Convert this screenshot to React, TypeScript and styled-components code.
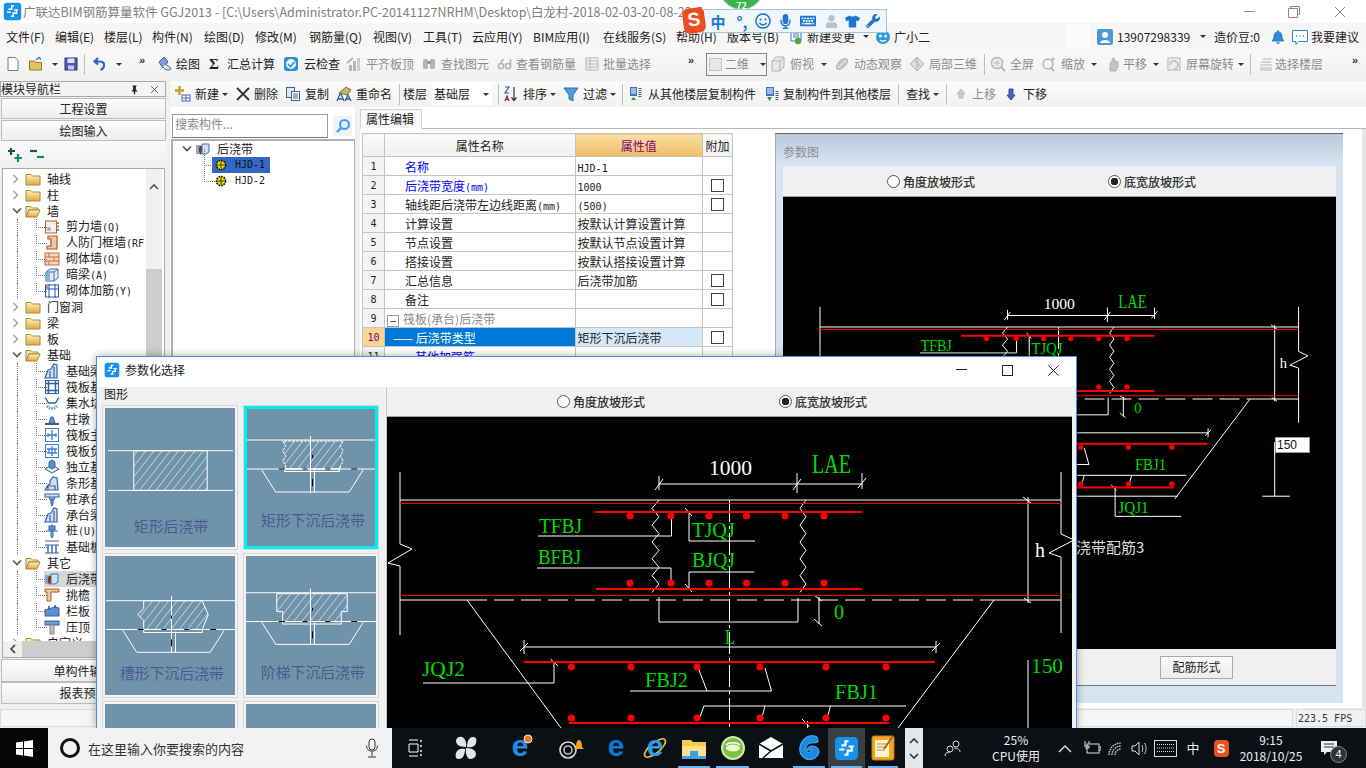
import React from 'react';
import styled, { createGlobalStyle } from 'styled-components';
import { FaMicrophone, FaTshirt, FaWrench, FaRegSmile, FaKeyboard, FaBell, FaUser } from 'react-icons/fa';

const CJK = '"Noto Sans CJK SC", "Liberation Sans", sans-serif';
const Global = createGlobalStyle`
  html, body { margin: 0; padding: 0; background: #fff; overflow: hidden; }
  * { box-sizing: border-box; }
  body { font-family: ${CJK}; font-size: 12px; color: #222; }
`;

const Screen = styled.div`position: relative; width: 1366px; height: 768px; overflow: hidden; display: flex; flex-direction: column; background: #fff;`;
const TitleBar = styled.div`height: 23px; flex: none; background: #fff; display: flex; align-items: center; padding-left: 3px; color: #808080; font-size: 12.5px; white-space: nowrap;`;
const TitleText = styled.span`margin-left: 1px; width: 680px; overflow: hidden;`;
const WinBtns = styled.div`margin-left: auto; display: flex; padding-right: 3px;`;
const WinBtn = styled.span<{ $w: number }>`width: ${p => p.$w}px; height: 23px; display: flex; align-items: center; justify-content: center;`;
const BarRow = styled.div<{ $h: number; $bg: string }>`height: ${p => p.$h}px; flex: none; display: flex; align-items: center; background: ${p => p.$bg}; white-space: nowrap;`;
const Slot = styled.div<{ $w: number }>`width: ${p => p.$w}px; flex: none; display: flex; align-items: center; height: 100%;`;
const IconBox = styled.span<{ $w: number }>`width: ${p => p.$w}px; flex: none; display: flex; align-items: center;`;
const Label = styled.span<{ $muted?: boolean }>`font-size: 12px; line-height: 16px; color: ${p => (p.$muted ? '#8c8c8c' : '#222')};`;
const Caret = styled.span`width: 0; height: 0; border-left: 3px solid transparent; border-right: 3px solid transparent; border-top: 3px solid #333;`;
const Sep = styled.span`width: 1px; height: 21px; background: #bdbdbd;`;
const More = styled.span`font-size: 11px; font-weight: 700; color: #333; font-family: "Liberation Sans", sans-serif; line-height: 10px; align-self: flex-start; margin-top: 5px;`;
const Combo2D = styled.div`width: 61px; height: 23px; border: 1px solid #858585; display: flex; align-items: center; gap: 3px; padding-left: 2px; background: #f4f4f4;`;
const Square = styled.span`width: 15px; height: 13px; background: #e8e8e8; border: 1px solid #c4c4c4;`;
const FloorCombo = styled.div`width: 60px; height: 22px; background: #fff; display: flex; align-items: center; justify-content: space-between; padding: 0 3px 0 2px;`;
const WhiteBlock = styled.span`display: block; width: 24px; height: 24px; background: #fbfbfb;`;
const SigmaGlyph = styled.span`font: 700 15px "Liberation Serif", serif; color: #222;`;
const Gap6 = styled.span`width: 6px;`;

const Main = styled.div`flex: 1; min-height: 0; display: flex; background: #f0f0f0;`;
const LeftNav = styled.div`width: 167px; flex: none; padding-top: 3px; display: flex; flex-direction: column; background: #f0f0f0;`;
const NavHead = styled.div`height: 16px; margin-right: 1px; border: 1px solid #a9a9a9; display: flex; align-items: center; font-size: 12px; line-height: 14px; color: #222; background: #f4f4f4;`;
const NavHeadBtns = styled.span`margin-left: auto; display: flex; align-items: center; gap: 9px; padding-right: 5px;`;
const NavBtn = styled.div<{ $h: number; $mt?: number }>`height: ${p => p.$h}px; margin: ${p => p.$mt ?? 1}px 1px 0 1px; border: 1px solid #bdbdbd; background: linear-gradient(#fdfdfd, #ededed); text-align: center; font-size: 12px; line-height: ${p => p.$h - 2}px; color: #222;`;
const ExpandBar = styled.div`height: 27px; flex: none; display: flex; align-items: center; padding-left: 7px; gap: 6px; background: linear-gradient(#fafafa, #f0f0f0);`;
const TreeBox = styled.div`height: 490px; flex: none; margin: 0 2px; border: 1px solid #a9a9a9; background: #fff; display: flex; flex-direction: column; overflow: hidden;`;
const TreeInner = styled.div`flex: 1; min-height: 0; display: flex; overflow: hidden;`;
const TreeList = styled.div`flex: 1; padding-top: 2px; overflow: hidden;`;
const VScroll = styled.div`width: 16px; flex: none; background: #f0f0f0; display: flex; flex-direction: column; margin-right: 2px;`;
const ScrollUp = styled.div`height: 100px; flex: none; background: #f0f0f0; padding: 7px 0 0 3px;`;
const ScrollThumb = styled.div`flex: 1; background: #cdcdcd;`;
const HScroll = styled.div`height: 16px; flex: none; background: #f0f0f0; display: flex;`;
const HArrow = styled.div`width: 19px; display: flex; align-items: center; justify-content: center;`;
const HThumb = styled.div`flex: 1; background: #cdcdcd;`;
const Row = styled.div<{ $lvl: number; $dots?: boolean }>`
  position: relative; height: 16px; display: flex; align-items: center; padding-left: ${p => (p.$lvl ? 41 : 9)}px; white-space: nowrap;
  &::before { content: ''; display: ${p => (p.$dots ? 'block' : 'none')}; position: absolute; left: 14px; top: 0; bottom: 0; border-left: 1px dotted #777; }
  &::after { content: ''; display: ${p => (p.$lvl ? 'block' : 'none')}; position: absolute; left: 33px; top: 0; width: 10px; height: 8px; border-left: 1px dotted #777; border-bottom: 1px dotted #777; }
`;
const Chev = styled.span`width: 13px; flex: none; display: flex;`;
const RowIcon = styled.span<{ $hl?: boolean }>`width: 20px; height: 16px; flex: none; display: flex; align-items: center; background: ${p => (p.$hl ? '#d8d8d8' : 'transparent')};`;
const RowText = styled.span<{ $hl?: boolean }>`font-size: 12px; line-height: 16px; color: #222; padding-left: 2px; background: ${p => (p.$hl ? '#d8d8d8' : 'transparent')};`;
const Lat = styled.span`font-family: "DejaVu Sans Mono", monospace; font-size: 10px;`;

const RightCol = styled.div`flex: 1; min-width: 0; display: flex; flex-direction: column; padding: 3px 0 0 3px;`;
const Work = styled.div`flex: 1; min-height: 0; display: flex; gap: 5px;`;
const CompPanel = styled.div`width: 185px; flex: none; display: flex; flex-direction: column; padding-top: 6px; background: #fff;`;
const SearchRow = styled.div`height: 25px; flex: none; display: flex; align-items: center; gap: 5px; padding-left: 2px;`;
const SearchInput = styled.div`width: 156px; height: 24px; border: 1px solid #9a9a9a; border-bottom-color: #777; background: #fff; color: #8a8a8a; font-size: 12px; line-height: 18px; padding-left: 2px;`;
const SearchBtn = styled.div`width: 19px; height: 20px; background: #f2f2f2; display: flex; align-items: center; justify-content: center;`;
const CompTree = styled.div`flex: 1; margin: 1px 0 0 1px; border: 2px solid #b0b0b0; border-right-width: 1px; background: #fff;`;
const CRow = styled.div<{ $child?: boolean }>`position: relative; height: 16px; display: flex; align-items: center; padding-left: ${p => (p.$child ? 39 : 9)}px;
  &::after { content: ''; display: ${p => (p.$child ? 'block' : 'none')}; position: absolute; left: 31px; top: -8px; width: 10px; height: 16px; border-left: 1px dotted #777; border-bottom: 1px dotted #777; }
`;
const CText = styled.span<{ $sel?: boolean }>`padding: 0 5px 0 2px; line-height: 16px; color: ${p => (p.$sel ? '#111' : '#222')}; background: ${p => (p.$sel ? '#3168c4' : 'transparent')}; display: flex; align-items: center; gap: 7px;`;

const PropPanel = styled.div`flex: 1; min-width: 0; display: flex; flex-direction: column; padding-top: 2px; background: #fff;`;
const TabBar = styled.div`height: 20px; flex: none; display: flex; border-bottom: 1px solid #b8b8b8;`;
const Tab = styled.div`width: 62px; height: 20px; border: 1px solid #d0d0d0; border-bottom: 1px solid #fff; background: #f8f8f8; font-size: 12px; line-height: 18px; padding-left: 5px;`;
const PropBody = styled.div`flex: 1; min-height: 0; display: flex;`;
const TableWrap = styled.div`width: 415px; flex: none; padding: 4px 0 0 2px; background: #fff;`;
const Grid = styled.table`border-collapse: collapse; table-layout: fixed; width: 371px; border: 1px solid #b0b0b0; font-size: 12px;`;
const HCell = styled.th<{ $val?: boolean }>`height: 23px; padding: 0; font-weight: 400; font-size: 12px; border: 1px solid #c4c4c4; color: ${p => (p.$val ? '#800080' : '#222')}; background: ${p => (p.$val ? 'linear-gradient(#fbdea5, #f0bd63)' : 'linear-gradient(#fbfbfb, #efefef)')};`;
const NumCell = styled.td<{ $on?: boolean }>`height: 19px; padding: 0; text-align: center; border: 1px solid #c4c4c4; font-family: "DejaVu Sans Mono", monospace; font-size: 10px; color: ${p => (p.$on ? '#800080' : '#222')}; background: ${p => (p.$on ? '#f9d48c' : '#f4f4f4')};`;
const NameCell = styled.td<{ $c?: string; $on?: boolean; $sub?: number }>`height: 19px; padding: 0 0 0 ${p => p.$sub ?? 20}px; border: 1px solid #c4c4c4; white-space: nowrap; overflow: hidden; color: ${p => p.$c ?? '#222'}; background: ${p => (p.$on ? '#0078d7' : '#fff')};`;
const ValCell = styled.td<{ $on?: boolean }>`height: 19px; padding: 0 0 0 2px; border: 1px solid #c4c4c4; white-space: nowrap; background: ${p => (p.$on ? '#d5e8f8' : '#fff')};`;
const AddCell = styled.td`height: 19px; padding: 0; border: 1px solid #c4c4c4; text-align: center;`;
const Check = styled.span`display: block; width: 13px; height: 13px; margin: 0 auto; border: 1px solid #444; background: #fff;`;
const Minus = styled.span`display: inline-block; width: 12px; height: 12px; border: 1px solid #999; margin: 0 4px 0 -18px; line-height: 9px; text-align: center; vertical-align: -2px; color: #333; font-size: 12px;`;

const ParamPanel = styled.div`width: 568px; flex: none; margin-top: 4px; height: 570px; border-top: 1px solid #666; border-left: 1px solid #aaa; background: linear-gradient(#b8cad9 0, #d6e4f1 30px, #d6e4f1 100%); padding: 0 7px; display: flex; flex-direction: column;`;
const ParamTitle = styled.div`height: 32px; flex: none; color: #8f8f8f; font-size: 12px; line-height: 35px;`;
const RadioBar = styled.div<{ $h: number; $first: number; $gap: number }>`height: ${p => p.$h}px; flex: none; background: #f0f0f0; border-bottom: 1px solid #a0a0a0; display: flex; align-items: center; padding-left: ${p => p.$first}px; gap: ${p => p.$gap}px; font-size: 12px;`;
const Radio = styled.span`display: flex; align-items: center; gap: 3px; font-size: 12px; color: #222; -webkit-text-stroke: 0.2px #222;`;
const RadioDot = styled.span<{ $on?: boolean }>`width: 13px; height: 13px; border-radius: 50%; border: 1px solid #555; background: ${p => (p.$on ? 'radial-gradient(circle, #222 0, #222 3.5px, #fff 4px)' : '#fff')};`;
const ParamCanvas = styled.div`height: 452px; flex: none; background: #000; position: relative;`;
const Input150 = styled.div`position: absolute; left: 492px; top: 240px; width: 35px; height: 16px; background: #fff; border: 1px solid #999; color: #111; font-size: 12px; font-family: "Liberation Sans", sans-serif; line-height: 14px; padding-left: 1px;`;
const ParamFoot = styled.div`height: 37px; flex: none; background: #f0f0f0; border-bottom: 1px solid #777; display: flex; align-items: center; justify-content: flex-end; padding: 0 103px 0 0;`;
const FootBtn = styled.div`width: 73px; height: 23px; border: 1px solid #aaa; background: linear-gradient(#fafafa, #ececec); text-align: center; line-height: 20px; font-size: 12px;`;
const RightGutter = styled.div`flex: 1; background: #fff; border-right: 4px solid #e6e6e6;`;

const StatusBar = styled.div`height: 20px; flex: none; background: #f0f0f0; display: flex; padding-top: 1px; border-bottom: 1px solid #eee;`;
const StatusMain = styled.div`flex: 1; margin-right: 3px; border: 1px solid #dcdcdc; background: #f6f6f6;`;
const StatusFps = styled.div`width: 70px; border: 1px solid #dcdcdc; font-family: "DejaVu Sans Mono", monospace; font-size: 10px; line-height: 17px; padding-left: 1px; color: #333;`;

const Taskbar = styled.div`height: 40px; flex: none; background: #0b1015; display: flex; align-items: stretch; color: #fff; position: relative; z-index: 6;`;
const StartBtn = styled.div`width: 48px; flex: none; display: flex; align-items: center; justify-content: center; background: #050505;`;
const SearchBox = styled.div`width: 344px; flex: none; background: #f2f2f2; display: flex; align-items: center; padding-left: 12px; color: #333; font-size: 13px;`;
const Cortana = styled.span`width: 20px; height: 20px; border-radius: 50%; border: 3px solid #111; flex: none; margin-right: 8px;`;
const MicWrap = styled.span`margin-left: auto; margin-right: 13px; display: flex; color: #333;`;
const TaskSlot = styled.div<{ $w: number; $active?: boolean; $run?: boolean }>`position: relative; width: ${p => p.$w}px; flex: none; display: flex; align-items: center; justify-content: center; background: ${p => (p.$active ? '#3c3f42' : 'transparent')};
  &::after { content: ''; display: ${p => (p.$run ? 'block' : 'none')}; position: absolute; left: 3px; right: 3px; bottom: 0; height: 2px; background: #6cb2f5; }
`;
const TaskScroll = styled.div`width: 18px; flex: none; margin-left: 4px; background: #e4e7ea; display: flex; flex-direction: column; justify-content: space-between; align-items: center; padding: 9px 0 8px;`;
const TwoLine = styled.div<{ $w: number }>`width: ${p => p.$w}px; flex: none; display: flex; flex-direction: column; align-items: center; justify-content: center; font-size: 12px; line-height: 16px; color: #eee; white-space: nowrap;`;
const NotifyBadge = styled.span`position: absolute; left: 24px; top: 18px; width: 17px; height: 17px; border-radius: 50%; background: #333; border: 1px solid #888; font-size: 11px; line-height: 15px; text-align: center; color: #fff; font-family: "Liberation Sans", sans-serif;`;
const TrayS = styled.span`display: block; width: 15px; height: 17px; background: #e9521c; border-radius: 4px; color: #fff; font: 700 13px/17px "Liberation Sans", sans-serif; text-align: center;`;
const TrayZh = styled.span`font-size: 13px;`;

const Dialog = styled.div`position: absolute; left: 96px; top: 356px; width: 981px; height: 372px; z-index: 5; background: #f0f0f0; border: 1px solid #4a90d9; border-bottom: 0; display: flex; flex-direction: column; overflow: hidden; box-shadow: 0 0 8px rgba(0,0,0,.35);`;
const DlgTitle = styled.div`height: 30px; flex: none; background: #fff; display: flex; align-items: flex-start; padding: 5px 0 0 7px; font-size: 12px; line-height: 16px; color: #222;`;
const DlgTitleText = styled.span`margin-left: 5px;`;
const DlgBtns = styled.div`margin-left: auto; margin-top: -5px; display: flex;`;
const DlgBtn = styled.span`width: 46px; height: 26px; display: flex; align-items: center; justify-content: center;`;
const DlgBody = styled.div`flex: 1; min-height: 0; display: flex;`;
const DlgLeft = styled.div`width: 290px; flex: none; padding: 0 0 0 5px; background: #f0f0f0; overflow: hidden; border-right: 1px solid #c8c8c8;`;
const GroupLabel = styled.div`font-size: 12px; line-height: 14px; height: 18px; padding-left: 2px; color: #222;`;
const CardGrid = styled.div`display: grid; grid-template-columns: 136px 136px; grid-auto-rows: 145px; gap: 3px 5px;`;
const Card = styled.div<{ $sel?: boolean }>`border: 1px solid #d6d6d6; padding: ${p => (p.$sel ? 0 : 2)}px; background: #f4f4f4;`;
const CardArt = styled.svg<{ $sel?: boolean }>`display: block; width: 100%; height: 100%; background: #6f93aa; ${p => (p.$sel ? 'outline: 3px solid #00f0f0; outline-offset: -3px;' : '')}`;
const DlgRight = styled.div`flex: 1; min-width: 0; display: flex; flex-direction: column; padding-right: 4px;`;
const DlgCanvas = styled.div`flex: 1; min-height: 0; background: #000; overflow: hidden;`;
const CadSvg = styled.svg`display: block; width: 100%; height: 100%;
  line, polyline, path { vector-effect: non-scaling-stroke; fill: none; }
`;

const Sogou = styled.div`position: absolute; left: 683px; top: 0; width: 204px; height: 34px; z-index: 9; display: flex; align-items: center; padding-top: 8px;`;
const SogouS = styled.span`position: absolute; left: 0; top: 8px; width: 22px; height: 25px; z-index: 2; border-radius: 6px; background: #ee4c1e; color: #fff; font: 700 19px/24px "Liberation Sans", sans-serif; text-align: center; transform: rotate(-8deg);`;
const SogouBar = styled.div`margin-left: 20px; width: 184px; height: 24px; background: #f1f6fb; border: 1px solid #a9c3d6; display: flex; align-items: center; color: #1b78d0;`;
const SogouCell = styled.span<{ $w: number; $c?: string }>`width: ${p => p.$w}px; flex: none; display: flex; align-items: center; justify-content: center; color: ${p => p.$c ?? '#1b78d0'}; font-size: 15px; font-weight: 700;`;
const GreenBall = styled.div`position: absolute; left: 35px; top: -40px; width: 47px; height: 50px; border-radius: 50%; background: #39b54a; border: 1px solid #bcd; color: #fff; font-size: 9px; text-align: center; padding-top: 40px; line-height: 9px; font-weight: 700;`;

/* ---------- icons ---------- */
const Svg16 = styled.svg`display: block; flex: none;`;
const I: React.FC<{ s?: number; children: React.ReactNode }> = ({ s = 16, children }) => (
  <Svg16 width={s} height={s} viewBox="0 0 16 16">{children}</Svg16>
);
const g = '#b4b4b4';
const icons: Record<string, React.ReactNode> = {
  new: <path d="M3 1.5h7l3 3v10H3z" fill="#fff" stroke="#6b7a8c" />,
  open: <><path d="M1.5 5h5l1 1.5h6V14h-12z" fill="#e8c063" stroke="#98752a" /><path d="M8 4l3-2.5 2 2" fill="none" stroke="#3d78b8" strokeWidth="1.3" /></>,
  save: <><rect x="2" y="2" width="12" height="12" fill="#4a5bb8" stroke="#2b3478" /><rect x="4.5" y="2.5" width="7" height="4.5" fill="#dfe6f5" /><rect x="5" y="9.5" width="6" height="4" fill="#c8d0e0" /></>,
  undo: <path d="M6 2L2.5 5.5 6 8.5M3 5.5h5c3.5 0 4.5 2.5 4 4.5-.3 1.5-2 3.5-3.5 4" fill="none" stroke="#2c6bbd" strokeWidth="2.2" />,
  draw: <><path d="M7 1l4 5-5 6-4-6z" fill="#7aa5d8" stroke="#34608f" /><path d="M8 8c2 2 5 2 6 5-2 2-6 1-8-2" fill="#dfe9f5" stroke="#34608f" /></>,
  cloud: <><rect x="1" y="1" width="14" height="14" rx="3" fill="#2f8fd8" /><circle cx="8" cy="8" r="5" fill="#e8f4ff" /><path d="M5 8l2.5 2.5L11.5 6" fill="none" stroke="#2f8fd8" strokeWidth="1.6" /></>,
  flat: <><rect x="3" y="9" width="3" height="6" fill={g} /><rect x="7" y="5" width="3" height="10" fill={g} /><rect x="11" y="2" width="3" height="13" fill="#ccc" /><path d="M1 7l6-5" stroke={g} strokeWidth="2" /></>,
  find: <><rect x="2" y="3" width="5" height="10" rx="1.5" fill={g} /><rect x="9" y="3" width="5" height="10" rx="1.5" fill={g} /><rect x="6" y="5" width="4" height="3" fill="#999" /></>,
  rebar: <><circle cx="4" cy="10" r="2.6" fill="none" stroke={g} strokeWidth="1.5" /><circle cx="11" cy="10" r="2.6" fill="none" stroke={g} strokeWidth="1.5" /><path d="M13.5 3v7M4 8c0-3 1-4 3-4" fill="none" stroke={g} strokeWidth="1.5" /></>,
  batch: <><rect x="2" y="2" width="12" height="12" fill="none" stroke={g} /><path d="M2 5h12M2 8h12M2 11h12M6 2v12" stroke={g} /></>,
  top: <><path d="M2 5l4-4h8v10l-4 4H2z" fill="#e8e8e8" stroke={g} /><path d="M2 5h8v10M10 5l4-4" fill="none" stroke={g} /></>,
  orbit: <><ellipse cx="8" cy="8" rx="7" ry="3.5" transform="rotate(-45 8 8)" fill="#c8c8c8" stroke={g} /><path d="M4 12L12 4" stroke="#eee" /></>,
  local: <><path d="M8 1l7 7-7 7-7-7z" fill="#ddd" stroke={g} /><path d="M5 4l7 7M8 1v14" stroke={g} /></>,
  full: <><circle cx="7" cy="7" r="5.5" fill="#eee" stroke={g} strokeWidth="1.4" /><path d="M7 4v6M4 7h6" stroke={g} /><path d="M11 11l4 4" stroke={g} strokeWidth="2" /></>,
  zoom: <><circle cx="7" cy="8" r="5" fill="#f3f3f3" stroke={g} strokeWidth="1.4" /><path d="M10 12l3 3" stroke={g} strokeWidth="2" /><path d="M12 1v4M10 3h4" stroke={g} /></>,
  pan: <path d="M5 15V7l2-1V3l2-1 1 3 3 1v5l-2 4z" fill="#c4c4c4" stroke={g} />,
  rotate: <><rect x="2" y="2" width="12" height="12" fill="#eee" stroke={g} /><path d="M4 9a4 4 0 1 1 4 4" fill="none" stroke={g} strokeWidth="1.4" /></>,
  floors: <path d="M5 3h9M3 6h10M2 9h12M2 12h12M2 14h12" stroke={g} strokeWidth="1.2" />,
  add: <><path d="M4.5 0v9M0 4.5h9" stroke="#c8a21f" strokeWidth="2.4" /><rect x="7" y="9" width="8" height="6" fill="#fff" stroke="#3a70b4" /><path d="M7 12h8M11 9v6" stroke="#3a70b4" /></>,
  del: <path d="M2 2l12 12M14 2L2 14" stroke="#333" strokeWidth="1.8" />,
  copy: <><rect x="1.5" y="1.5" width="8" height="10" fill="#dfe7f5" stroke="#46628e" /><rect x="6.5" y="5.5" width="8" height="9" fill="#fff" stroke="#46628e" /><path d="M8 8h5M8 10h5M8 12h5" stroke="#46628e" /></>,
  rename: <><path d="M3 7l7-6 5 3-4 5z" fill="#c8b26a" stroke="#7a6c2c" /><path d="M1 15l3-7h1l3 7M2 13h5" fill="none" stroke="#2e5f98" strokeWidth="1.3" /><path d="M9 15l3-6 3 6M10 13h4" fill="none" stroke="#2e5f98" strokeWidth="1.3" /></>,
  sort: <><path d="M2 1h4L2 7h4" fill="none" stroke="#2a5da8" strokeWidth="1.2" /><path d="M2 15l2-5 2 5M2.7 13.5h2.6" fill="none" stroke="#a02020" strokeWidth="1.2" /><path d="M11 1v13M8.5 11.5l2.5 3 2.5-3" fill="none" stroke="#333" strokeWidth="1.2" /></>,
  filter: <path d="M1 2h14L10 9v6l-4-2V9z" fill="#4f9ddf" stroke="#2e6fa9" />,
  copyFrom: <><rect x="2" y="1" width="7" height="9" fill="#3b74c4" /><path d="M3 3h5M3 5h5M3 7h5" stroke="#fff" /><path d="M12 2v10" stroke="#555" strokeWidth="3" strokeDasharray="1 1" /><path d="M3 14l2.5-3 2.5 3z" fill="#2c9a3e" /></>,
  copyTo: <><rect x="2" y="1" width="8" height="9" fill="#3b74c4" /><path d="M3 3h6M3 5h6M3 7h6" stroke="#fff" /><path d="M13 5v10" stroke="#555" strokeWidth="3" strokeDasharray="1 1" /><path d="M3 11l2.5 4 2.5-4z" fill="#2c9a3e" /></>,
  up: <path d="M8 3l4 5H10v4H6V8H4z" fill="#c9c9c9" stroke="#bbb" />,
  down: <path d="M8 14L4 9h2V3h4v6h2z" fill="#3c66c4" stroke="#2d4d98" />,
  doc: <><path d="M3 1h8l2 2v9H3z" fill="#fff" stroke="#3b74c4" /><path d="M5 4h6M5 6h6M5 8h6" stroke="#3b74c4" /><circle cx="10" cy="12" r="3.2" fill="#52a83c" /></>,
  face: <><circle cx="8" cy="8" r="7" fill="#2899e0" /><circle cx="5.5" cy="7" r="1.5" fill="#fff" /><circle cx="10.5" cy="7" r="1.5" fill="#fff" /><path d="M5 11c2 1.5 4 1.5 6 0" stroke="#fff" fill="none" strokeWidth="1.2" /></>,
  avatar: <><rect x="0" y="0" width="16" height="16" rx="2" fill="#4b9ad8" /><circle cx="8" cy="6" r="3" fill="#fff" /><path d="M3 14c0-4 10-4 10 0z" fill="#fff" /></>,
  chat: <><path d="M.5 1.5h15v11H7l-3 3v-3H.5z" fill="#fff" stroke="#2e86d6" /><path d="M4 7h1M7.5 7h1M11 7h1" stroke="#2e86d6" strokeWidth="1.4" /></>,
  mag: <><circle cx="9.5" cy="6.5" r="4.5" fill="#d8efff" stroke="#3aa0e8" strokeWidth="2" /><path d="M6 10l-4 4" stroke="#3aa0e8" strokeWidth="2.4" /></>,
  plus2: <><path d="M4 1v7M1 4h7" stroke="#155" strokeWidth="2.2" /><path d="M11 7v8M7.5 11h7.5" stroke="#0a8a70" strokeWidth="2.2" /></>,
  minus2: <><path d="M1 4h7" stroke="#155" strokeWidth="2.2" /><path d="M8 10h7" stroke="#0a8a70" strokeWidth="2.2" /></>,
  fold: <path d="M1 3.5h5l1.5 1.5H15v9H1z" fill="url(#fg)" stroke="#a88a40" />,
  foldOpen: <><path d="M1 3.5h5l1.5 1.5H13v2H4L1 14z" fill="#f5e2a8" stroke="#a88a40" /><path d="M4 7h11l-3 7H1z" fill="url(#fg)" stroke="#a88a40" /></>,
  hatch: <><rect x="1.5" y="2" width="11" height="12" fill="#f4efe8" stroke="#a06a3a" /><circle cx="5" cy="10" r="2" fill="#aaa" /><path d="M14 3v10" stroke="#c65a1a" strokeDasharray="2 1.5" strokeWidth="1.6" /></>,
  frame: <path d="M4 1h9v13H3v-3h4V4H4z" fill="#f2c8a0" stroke="#a85a20" strokeWidth="1.2" />,
  brick: <><rect x="1" y="2" width="14" height="12" fill="#f6d8c0" stroke="#c86a3a" /><path d="M1 6h14M1 10h14M5 2v4M10 6v4M5 10v4" stroke="#c86a3a" /></>,
  beam: <><path d="M2 5l4-3h8v9l-4 3H2z" fill="#dfeaf6" stroke="#3a70b4" /><path d="M2 5h8v9M10 5l4-3" fill="none" stroke="#3a70b4" /><rect x="3" y="6" width="3" height="7" fill="#8ab0dc" /></>,
  bars: <><rect x="1.5" y="2" width="13" height="12" fill="none" stroke="#2856b8" /><path d="M5 1v14M11 1v14M1 6h14" stroke="#2856b8" /><circle cx="3" cy="4" r="1" fill="#c65a1a" /></>,
  base: <path d="M1 15l3-8 3-1 3-5 3 1v13zM6 8v7M10 4v11" fill="#cfe0f2" stroke="#2e62a8" strokeWidth="1.2" />,
  raft: <><rect x="1.5" y="1.5" width="13" height="13" fill="#fff" stroke="#2e62a8" /><path d="M4.5 1.5v13M11.5 1.5v13M1.5 4.5h13M1.5 11.5h13" stroke="#2e62a8" strokeWidth="1.5" /></>,
  pit: <><path d="M1 3c2 0 2 5 4 5h6c2 0 2-5 4-5" fill="none" stroke="#2e62a8" strokeWidth="1.4" /><path d="M3 11c3 3 7 3 10 0" stroke="#6a9ad8" strokeWidth="3" strokeDasharray="1.5 1" fill="none" /></>,
  pier: <><rect x="1" y="12" width="14" height="2" fill="#557" /><path d="M5 12l2-6h2l2 6z" fill="#6a9ad8" stroke="#2e62a8" /></>,
  mainb: <><rect x="1.5" y="1.5" width="13" height="13" fill="#fff" stroke="#3a80d4" /><path d="M8 3v10M4 8h8M4 6v4M12 6v4" stroke="#3a80d4" strokeWidth="1.3" /></>,
  negb: <><rect x="1.5" y="1.5" width="13" height="13" fill="#fff" stroke="#3a80d4" /><path d="M3 6h10M3 10h10M8 3v10M5 6v4M11 6v4" stroke="#3a80d4" strokeWidth="1.3" /></>,
  iso: <><path d="M1 10l7-4 7 4-7 4z" fill="#dfeaf6" stroke="#2e62a8" /><path d="M5 8V3l3-2 3 2v5l-3 2z" fill="#5d8ed0" stroke="#2e62a8" /></>,
  strip: <path d="M1 15l3-5 2-1V6l3-4 4 1 1 12zM4 15v-4h7v4" fill="#cfe0f2" stroke="#2e62a8" strokeWidth="1.2" />,
  cap: <><rect x="1" y="3" width="14" height="3" fill="#cfe0f2" stroke="#2e62a8" /><path d="M5 6l1 3h4l1-3M7 9v4l1 2 1-2V9" fill="#7aa0d8" stroke="#2e62a8" /></>,
  pile: <><rect x="5" y="3" width="6" height="4" fill="#5d8ed0" stroke="#2e62a8" /><path d="M2 8h12M8 1v2M7 8v5l1 2 1-2V8" stroke="#2e62a8" fill="#9ab8e0" /></>,
  band: <><path d="M1 2h14M1 14h14M1 6h14" stroke="#2e62a8" /><path d="M4 6v8M8 6v8M12 6v8" stroke="#2e62a8" strokeWidth="1.4" /></>,
  hjd: <><rect x="1" y="4" width="5" height="9" fill="#8aa8c8" /><path d="M7 3h7v8l-3 2H7z" fill="#cfe0f2" stroke="#3a70b4" /><path d="M5 5c-2 2-1 8 1 9 1-3 1-6 1-9z" fill="#7a3a1a" /></>,
  eave: <path d="M1 2h14v3H7v9H3V5H1z" fill="#f3c6a0" stroke="#b05a20" />,
  rail: <><path d="M1 7l10-3 4 1v8H1z" fill="#5f8fd0" stroke="#2e62a8" /><path d="M5 3v4M11 2v3" stroke="#2e62a8" strokeWidth="1.6" /></>,
  coping: <><rect x="1" y="2" width="14" height="4" fill="#6a9ad8" stroke="#2e62a8" /><rect x="6" y="6" width="4" height="9" fill="#bbb" stroke="#888" /></>,
  hjdDot: <><circle cx="8" cy="8" r="5.2" fill="#f4e000" stroke="#111" strokeWidth="1.8" strokeDasharray="2 1" /><path d="M8 4v8M4 8h8" stroke="#222" /></>,
  pin: <path d="M5 2h6v1l-1 1v4l2 2v1H9v4H7v-4H4v-1l2-2V4L5 3z" fill="#222" />,
  close: <path d="M3 3l10 10M13 3L3 13" stroke="#333" strokeWidth="1.1" />,
};
const Ic: React.FC<{ n: string; s?: number }> = ({ n, s }) => <I s={s}>{icons[n]}</I>;
const ChevR = () => <svg width="8" height="10" viewBox="0 0 8 10"><path d="M1.5 1l4 4-4 4" fill="none" stroke="#a8a8a8" strokeWidth="1.6" /></svg>;
const ChevD = () => <svg width="10" height="8" viewBox="0 0 10 8"><path d="M1 1.5l4 4 4-4" fill="none" stroke="#555" strokeWidth="1.6" /></svg>;
const ChevU = ({ c = '#555' }: { c?: string }) => <svg width="10" height="7" viewBox="0 0 10 7"><path d="M1 6l4-4 4 4" fill="none" stroke={c} strokeWidth="1.6" /></svg>;
const ChevDn = ({ c = '#555' }: { c?: string }) => <svg width="10" height="7" viewBox="0 0 10 7"><path d="M1 1l4 4 4-4" fill="none" stroke={c} strokeWidth="1.6" /></svg>;
const ChevL = () => <svg width="7" height="10" viewBox="0 0 7 10"><path d="M6 1L2 5l4 4" fill="none" stroke="#555" strokeWidth="1.8" /></svg>;

/* ---------- toolbars ---------- */
type Tool = { x: number; ic?: string; tx?: number; t?: React.ReactNode; m?: boolean; caret?: boolean; sep?: boolean; more?: boolean; node?: React.ReactNode };
const Strip: React.FC<{ items: Tool[]; end: number }> = ({ items, end }) => (
  <>
    {items.map((it, i) => {
      const next = i + 1 < items.length ? items[i + 1].x : end;
      return (
        <Slot key={i} $w={next - it.x}>
          {it.node}
          {it.caret && <Caret />}
          {it.sep && <Sep />}
          {it.more && <More>»</More>}
          {it.ic && <IconBox $w={(it.tx ?? it.x + 18) - it.x}><Ic n={it.ic} /></IconBox>}
          {it.t && <Label $muted={it.m}>{it.t}</Label>}
        </Slot>
      );
    })}
  </>
);

const menuItems: Tool[] = [
  { x: 0 }, { x: 6, t: '文件(F)' }, { x: 55, t: '编辑(E)' }, { x: 104, t: '楼层(L)' }, { x: 152, t: '构件(N)' }, { x: 204, t: '绘图(D)' },
  { x: 255, t: '修改(M)' }, { x: 309, t: '钢筋量(Q)' }, { x: 373, t: '视图(V)' }, { x: 423, t: '工具(T)' }, { x: 472, t: '云应用(Y)' },
  { x: 533, t: 'BIM应用(I)' }, { x: 603, t: '在线服务(S)' }, { x: 676, t: '帮助(H)' }, { x: 727, t: '版本号(B)' },
  { x: 788, ic: 'doc', tx: 807, t: '新建变更' }, { x: 863, caret: true }, { x: 875, ic: 'face', tx: 894, t: '广小二' },
  { x: 932 }, { x: 1066, node: <WhiteBlock /> }, { x: 1097, ic: 'avatar', tx: 1117, t: '13907298339' }, { x: 1200, caret: true },
  { x: 1214, t: '造价豆:0' }, { x: 1271, node: <FaBell color="#2e86d6" size={14} /> }, { x: 1292, ic: 'chat', tx: 1311, t: '我要建议' },
];

const combo2d = <Combo2D><Square /><Label $muted>二维</Label><Gap6 /><Caret /></Combo2D>;
const row1: Tool[] = [
  { x: 0 }, { x: 5, ic: 'new', tx: 28 }, { x: 28, ic: 'open', tx: 52 }, { x: 52, caret: true }, { x: 63, ic: 'save', tx: 84 }, { x: 84, sep: true },
  { x: 92, ic: 'undo', tx: 116 }, { x: 116, caret: true }, { x: 139, more: true },
  { x: 157, ic: 'draw', tx: 176, t: '绘图' },
  { x: 209, node: <SigmaGlyph>Σ</SigmaGlyph> },
  { x: 227, t: '汇总计算' }, { x: 283, ic: 'cloud', tx: 304, t: '云检查' }, { x: 346, ic: 'flat', tx: 366, t: '平齐板顶', m: true },
  { x: 421, ic: 'find', tx: 441, t: '查找图元', m: true }, { x: 497, ic: 'rebar', tx: 516, t: '查看钢筋量', m: true },
  { x: 584, ic: 'batch', tx: 603, t: '批量选择', m: true }, { x: 688, more: true }, { x: 706, node: combo2d },
  { x: 770, ic: 'top', tx: 790, t: '俯视', m: true }, { x: 821, caret: true }, { x: 834, ic: 'orbit', tx: 854, t: '动态观察', m: true },
  { x: 909, ic: 'local', tx: 929, t: '局部三维', m: true }, { x: 984, sep: true }, { x: 990, ic: 'full', tx: 1010, t: '全屏', m: true },
  { x: 1041, ic: 'zoom', tx: 1061, t: '缩放', m: true }, { x: 1091, caret: true }, { x: 1105, ic: 'pan', tx: 1123, t: '平移', m: true },
  { x: 1153, caret: true }, { x: 1166, ic: 'rotate', tx: 1186, t: '屏幕旋转', m: true }, { x: 1238, caret: true }, { x: 1250, sep: true },
  { x: 1258, ic: 'floors', tx: 1275, t: '选择楼层', m: true }, { x: 1352, more: true },
];
const floorCombo = <FloorCombo><Label>基础层</Label><Caret /></FloorCombo>;
const row2: Tool[] = [
  { x: 170 }, { x: 175, ic: 'add', tx: 195, t: '新建' }, { x: 222, caret: true }, { x: 235, ic: 'del', tx: 254, t: '删除' },
  { x: 285, ic: 'copy', tx: 305, t: '复制' }, { x: 336, ic: 'rename', tx: 356, t: '重命名' }, { x: 399, sep: true }, { x: 403, t: '楼层' },
  { x: 432, node: floorCombo }, { x: 498, sep: true }, { x: 503, ic: 'sort', tx: 523, t: '排序' }, { x: 550, caret: true },
  { x: 563, ic: 'filter', tx: 583, t: '过滤' }, { x: 610, caret: true }, { x: 622, sep: true }, { x: 628, ic: 'copyFrom', tx: 648, t: '从其他楼层复制构件' },
  { x: 764, ic: 'copyTo', tx: 783, t: '复制构件到其他楼层' }, { x: 898, sep: true }, { x: 906, t: '查找' }, { x: 933, caret: true }, { x: 946, sep: true },
  { x: 953, ic: 'up', tx: 972, t: '上移', m: true }, { x: 1003, ic: 'down', tx: 1023, t: '下移' },
];

/* ---------- trees ---------- */
type TreeItem = { t: React.ReactNode; ic?: string; open?: boolean; hl?: boolean };
const tree: TreeItem[] = [
  { t: '轴线' }, { t: '柱' }, { t: '墙', open: true },
  { ic: 'hatch', t: <>剪力墙<Lat>(Q)</Lat></> }, { ic: 'frame', t: <>人防门框墙<Lat>(RF</Lat></> }, { ic: 'brick', t: <>砌体墙<Lat>(Q)</Lat></> },
  { ic: 'beam', t: <>暗梁<Lat>(A)</Lat></> }, { ic: 'bars', t: <>砌体加筋<Lat>(Y)</Lat></> },
  { t: '门窗洞' }, { t: '梁' }, { t: '板' }, { t: '基础', open: true },
  { ic: 'base', t: '基础梁' }, { ic: 'raft', t: '筏板基础' }, { ic: 'pit', t: '集水坑' }, { ic: 'pier', t: '柱墩' },
  { ic: 'mainb', t: '筏板主筋' }, { ic: 'negb', t: '筏板负筋' }, { ic: 'iso', t: '独立基础' }, { ic: 'strip', t: '条形基础' },
  { ic: 'cap', t: '桩承台' }, { ic: 'base', t: '承台梁' }, { ic: 'pile', t: <>桩<Lat>(U)</Lat></> }, { ic: 'band', t: '基础板带' },
  { t: '其它', open: true }, { ic: 'hjd', t: '后浇带', hl: true }, { ic: 'eave', t: '挑檐' }, { ic: 'rail', t: '栏板' }, { ic: 'coping', t: '压顶' },
  { t: '自定义' },
];

const rows: { n: number; name: React.ReactNode; c?: string; val?: React.ReactNode; chk?: boolean }[] = [
  { n: 1, name: '名称', c: '#0000ff', val: <Lat>HJD-1</Lat> },
  { n: 2, name: <>后浇带宽度<Lat>(mm)</Lat></>, c: '#0000ff', val: <Lat>1000</Lat>, chk: true },
  { n: 3, name: <>轴线距后浇带左边线距离<Lat>(mm)</Lat></>, val: <Lat>(500)</Lat>, chk: true },
  { n: 4, name: '计算设置', val: '按默认计算设置计算' },
  { n: 5, name: '节点设置', val: '按默认节点设置计算' },
  { n: 6, name: '搭接设置', val: '按默认搭接设置计算' },
  { n: 7, name: '汇总信息', val: '后浇带加筋', chk: true },
  { n: 8, name: '备注', chk: true },
];

/* ---------- CAD drawing ---------- */
const zig = (xa: number, xb: number, y1: number, y2: number) => {
  const p: string[] = [];
  let i = 0;
  for (let y = y1; y < y2; y += 8.4) { p.push(`${i % 2 ? xa : xb},${y.toFixed(1)}`); i++; }
  return p.join(' ');
};
const GR = '#00dc00';
const Lab: React.FC<{ x: number; y: number; w: number; fs: number; c?: string; children: string }> = ({ x, y, w, fs, c = GR, children }) => (
  <text x={x} y={y} textLength={w} lengthAdjust="spacingAndGlyphs" fontFamily='"Liberation Serif", serif' fontSize={fs} fill={c}>{children}</text>
);
const Dot: React.FC<{ x: number; y: number }> = ({ x, y }) => <circle cx={x} cy={y} r={3.6} fill="#ff0000" />;
const xsTop = [630, 671, 709, 746.5, 785, 824];
const xsBar = [571.5, 631, 697, 760, 826, 886];
const whitePath = [
  'M400 472V544L412 549L388 563L400 566V635', 'M1061 472V534L1074 540L1049 553L1061 557V633', 'M400 500H1061',
  'M400 600H467', 'M994 600H1061', 'M467 600L561 728L572 743', 'M994 600L898 728L890 739',
  'M659 597V622H798V598',
  'M659 484H862', 'M659 476V490', 'M797 473V493', 'M862 473V489', 'M655 490L663 479', 'M793 490L801 479', 'M858 488L866 478',
  'M538 536H671.5V517', 'M537 568H671V583', 'M755 541H689V512', 'M685 508L692 516', 'M754 572H689V589', 'M685 584L692 592',
  'M1028 497V603', 'M1028 660V735', 'M1023 497L1031 503', 'M1024 598L1031 603',
  'M819 597V624', 'M814 595L822 601', 'M814 619L822 626',
  'M524 647H936', 'M524 640V654', 'M936 641V653', 'M520 651L528 643', 'M932 651L940 643',
  'M423 683H554V662', 'M550.5 659L558 666',
  'M630 691H771.5', 'M699 670L707 691', 'M765 668L771.5 691',
  'M704 706H906', 'M704 706L700 717', 'M765 706L762.6 715', 'M830.5 706L828 715', 'M802 719L809.5 727',
  'M560 735H894', 'M807.6 721V763H899', 'M1011 735H1049',
].join(' ');
const Drawing: React.FC<{ green150?: boolean }> = ({ green150 }) => (
  <>
    <path d={whitePath} stroke="#fff" strokeWidth={1} />
    <path d="M467 600H994" stroke="#fff" strokeWidth={1} strokeDasharray="20 7" />
    <path d="M729.5 500V740" stroke="#fff" strokeWidth={1} strokeDasharray="22 4 3 4" />
    <polyline points={zig(652, 659, 500, 596)} stroke="#fff" strokeWidth={1} />
    <polyline points={zig(800, 806, 500, 596)} stroke="#fff" strokeWidth={1} />
    <path d="M400 503.5H1061M400 595.5H1061" stroke="#f00" strokeWidth={1} />
    <path d="M595 512H862M596 589H862M524 662H935M569 723H889" stroke="#f00" strokeWidth={2} />
    {xsTop.map(x => <Dot key={x} x={x} y={516} />)}
    {xsTop.map(x => <Dot key={x} x={x} y={583} />)}
    {xsBar.map(x => <Dot key={x} x={x} y={667} />)}
    {xsBar.map(x => <Dot key={x} x={x} y={718} />)}
    <Lab x={709} y={475} w={43} fs={21} c="#fff">1000</Lab>
    <Lab x={812} y={473} w={39} fs={27}>LAE</Lab>
    <Lab x={539} y={533} w={43} fs={22}>TFBJ</Lab>
    <Lab x={538} y={564} w={43} fs={22}>BFBJ</Lab>
    <Lab x={692} y={537} w={43} fs={22}>TJQJ</Lab>
    <Lab x={692} y={567} w={43} fs={22}>BJQJ</Lab>
    <Lab x={1035} y={557} w={10} fs={21} c="#fff">h</Lab>
    <Lab x={834} y={619} w={10} fs={21}>0</Lab>
    <Lab x={725} y={644} w={10} fs={22}>L</Lab>
    <Lab x={422} y={676} w={43} fs={22}>JQJ2</Lab>
    <Lab x={645} y={687} w={43} fs={22}>FBJ2</Lab>
    <Lab x={835} y={699} w={43} fs={22}>FBJ1</Lab>
    <Lab x={812} y={758} w={42} fs={22}>JQJ1</Lab>
    {green150 && <Lab x={1031} y={673} w={32} fs={21}>150</Lab>}
  </>
);

/* ---------- thumbnails ---------- */
const Hatch: React.FC<{ id: string }> = ({ id }) => (
  <pattern id={id} width="6.5" height="6.5" patternUnits="userSpaceOnUse" patternTransform="rotate(38)">
    <line x1="0" y1="0" x2="0" y2="6.5" stroke="#fff" strokeWidth="1" />
  </pattern>
);
const W = { stroke: '#fff', strokeWidth: 1, fill: 'none' };
const Thumb: React.FC<{ sel?: boolean; label?: string; lx?: number; ly?: number; children?: React.ReactNode }> = ({ sel, label, lx, ly, children }) => (
  <Card $sel={sel}>
    <CardArt $sel={sel} viewBox={sel ? '-2 -2 135 143' : '0 0 131 140'} preserveAspectRatio="none">
      {children}
      {label && <text x={lx} y={ly} fontSize="15" fill="#4b5a95" fontFamily={CJK}>{label}</text>}
    </CardArt>
  </Card>
);
const Sink: React.FC<{ y: number }> = ({ y }) => <path d={`M16 ${y}L30 ${y + 22}H104L118 ${y}`} {...W} />;
const Ticks: React.FC<{ y: number }> = ({ y }) => (
  <path d={`M33 ${y}h6M57 ${y}h5M80 ${y}h5M106 ${y}h6M67 ${y - 14}v3M67 ${y + 10}v7`} stroke="#000" strokeWidth="1" />
);

/* ---------- small taskbar icons ---------- */
const Win = () => <svg width="17" height="17" viewBox="0 0 17 17"><path d="M0 2.5L7 1.5V8H0zM8 1.4L17 0V8H8zM0 9H7V15.5L0 14.5zM8 9H17V17L8 15.6z" fill="#fff" /></svg>;
const TaskView = () => <svg width="16" height="18" viewBox="0 0 16 18"><path d="M1 1h9M1 17h9M1 5h9v8H1z" fill="none" stroke="#fff" /><path d="M13 1v2M13 6v2M13 11v2M13 15v2" stroke="#fff" strokeWidth="1.4" /></svg>;
const Fan = () => <svg width="22" height="24" viewBox="0 0 22 24"><path d="M11 11C4 11 1 8 1 5s3-5 6-4 5 6 4 10zM11 12c7 0 10 3 10 6s-3 5-6 5-5-7-4-11zM12 11c0-7 3-10 6-10s4 2 3 6-5 5-9 4zM10 13c0 7-3 10-6 10s-4-2-3-6 5-5 9-4z" fill="#e4e4e4" /></svg>;
const IeE: React.FC<{ c: string; ring?: string; badge?: string }> = ({ c, ring, badge }) => (
  <svg width="26" height="28" viewBox="0 0 26 28">
    {ring && <ellipse cx="13" cy="14" rx="13" ry="5" transform="rotate(-40 13 14)" fill="none" stroke={ring} strokeWidth="1.6" />}
    <text x="13" y="22" textAnchor="middle" fontFamily='"Liberation Sans", sans-serif' fontWeight="700" fontSize="30" fill={c}>e</text>
    {badge && <circle cx="21" cy="5" r="4" fill={badge} stroke="#eee" />}
  </svg>
);
const Spiral = () => <svg width="30" height="26" viewBox="0 0 30 26"><circle cx="11" cy="15" r="8" fill="none" stroke="#ddd" strokeWidth="1.6" /><circle cx="11" cy="15" r="4" fill="none" stroke="#bbb" strokeWidth="1.6" /><path d="M19 12c0-4 1-7 3-7s3 3 3 7l2 2H17z" fill="#f2a516" /></svg>;
const Folder = () => <svg width="24" height="22" viewBox="0 0 24 22"><path d="M0 3h9l2 2h13v15H0z" fill="#f6c94b" /><rect x="0" y="9" width="24" height="11" fill="#ffe08a" /><rect x="8" y="14" width="8" height="6" fill="#3aa0e8" /><rect x="0" y="19" width="24" height="3" fill="#3aa0e8" /></svg>;
const GreenApp = () => <svg width="24" height="26" viewBox="0 0 24 26"><circle cx="12" cy="13" r="11" fill="#7cc141" stroke="#cdeaaa" strokeWidth="2" /><ellipse cx="12" cy="13" rx="7" ry="3.5" fill="#e8f7d4" /><path d="M5 10c3-3 11-3 14 0" stroke="#fff" fill="none" strokeWidth="1.4" /></svg>;
const Mail = () => <svg width="24" height="22" viewBox="0 0 24 22"><path d="M0 7L12 0l12 7v14H0z" fill="#fff" /><path d="M0 7l12 7 12-7M12 14L4 21" stroke="#111" strokeWidth="1.6" fill="none" /></svg>;
const BlueG = () => <svg width="26" height="28" viewBox="0 0 26 28"><path d="M21 3c-3-2-9-2-13 2C2 11 2 22 10 25c6 2 12-1 13-7 0-4-3-6-7-6-3 0-5 2-5 4h5c-1 3-5 3-6 0-1-5 4-8 8-7l4-1c0-2 0-3-1-5z" fill="#1e88e5" stroke="#58b6ff" /></svg>;
const Gld: React.FC<{ s?: number }> = ({ s = 24 }) => <svg width={s} height={s} viewBox="0 0 24 24"><rect x="1" y="1" width="22" height="22" rx="4" fill="#1492ee" /><path d="M7 9h4V5h3M17 10v4h-4v4h-3M5 13h5M14 10h5" fill="none" stroke="#fff" strokeWidth="2" /></svg>;
const Note = () => <svg width="24" height="26" viewBox="0 0 24 26"><rect x="1" y="1" width="22" height="24" rx="2" fill="#f5a623" stroke="#c97a10" /><rect x="4" y="5" width="14" height="17" fill="#fdf3cf" /><path d="M6 9h10M6 12h10M6 15h8" stroke="#b88a40" /><path d="M22 1L13 14" stroke="#a86a10" strokeWidth="2" /></svg>;
const People = () => <svg width="18" height="18" viewBox="0 0 18 18"><circle cx="12" cy="5" r="3" fill="none" stroke="#ddd" /><circle cx="6" cy="10" r="3" fill="none" stroke="#ddd" /><path d="M1 17c0-3 2-4 5-4M10 9c3 0 6 1 6 4" fill="none" stroke="#ddd" /></svg>;
const TrayChev = () => <svg width="14" height="9" viewBox="0 0 14 9"><path d="M1 8l6-6 6 6" fill="none" stroke="#ddd" strokeWidth="1.4" /></svg>;
const Plug = () => <svg width="18" height="14" viewBox="0 0 18 14"><rect x="4" y="3" width="12" height="9" fill="none" stroke="#ddd" /><path d="M16 6h2v3h-2M2 0v5M6 0v3M1 5h5v2H2" stroke="#ddd" fill="none" /></svg>;
const Wifi = () => <svg width="16" height="15" viewBox="0 0 16 15"><path d="M2 14a12 12 0 0 1 12-12M5 14a9 9 0 0 1 9-9M8 14a6 6 0 0 1 6-6" fill="none" stroke="#ccc" strokeDasharray="1.6 .8" strokeWidth="1.4" /></svg>;
const Speaker = () => <svg width="16" height="15" viewBox="0 0 16 15"><path d="M1 5h3l4-4v13l-4-4H1z" fill="none" stroke="#ddd" /><path d="M11 4c1 2 1 5 0 7M13.5 2c2 3 2 8 0 11" fill="none" stroke="#ccc" /></svg>;
const Kbd = () => <svg width="23" height="17" viewBox="0 0 23 17"><rect x=".5" y=".5" width="22" height="16" fill="none" stroke="#ddd" /><path d="M3 4.5h17M3 8h17M3 11.5h17" stroke="#ddd" strokeDasharray="1 1" /></svg>;
const Notify = () => <svg width="16" height="15" viewBox="0 0 16 15"><path d="M0 0h16v11H6l-3 3v-3H0z" fill="#eee" /><path d="M3 3h10M3 6h10" stroke="#333" /></svg>;
const Mic = () => <svg width="14" height="20" viewBox="0 0 14 20"><rect x="4" y="1" width="6" height="11" rx="3" fill="none" stroke="#333" /><path d="M1.5 8c0 7 11 7 11 0M7 14v4M3 19h8" fill="none" stroke="#333" /></svg>;
const DefsSvg = styled.svg`position: absolute;`;

const wc = '#8a8a8a';

export default function App() {
  return (
    <Screen>
      <Global />
      <DefsSvg width="0" height="0">
        <defs>
          <linearGradient id="fg" x1="0" y1="0" x2="0" y2="1"><stop offset="0" stopColor="#fdf2c4" /><stop offset="1" stopColor="#e4a92f" /></linearGradient>
        </defs>
      </DefsSvg>
      <TitleBar>
        <Gld s={19} />
        <TitleText>广联达BIM钢筋算量软件 GGJ2013 - [C:\Users\Administrator.PC-20141127NRHM\Desktop\白龙村-2018-02-03-20-08-22.GGJ12]</TitleText>
        <WinBtns>
          <WinBtn $w={44}><svg width="11" height="2"><rect width="11" height="1" y="0" fill={wc} /></svg></WinBtn>
          <WinBtn $w={46}><svg width="12" height="12"><path d="M2.5 2.5V.5h9v8h-2M.5 2.5h9v9h-9z" fill="none" stroke={wc} /></svg></WinBtn>
          <WinBtn $w={46}><svg width="12" height="12"><path d="M1 1l10 10M11 1L1 11" stroke={wc} /></svg></WinBtn>
        </WinBtns>
      </TitleBar>
      <BarRow $h={27} $bg="#f6f6f6"><Strip items={menuItems} end={1366} /></BarRow>
      <BarRow $h={28} $bg="linear-gradient(#f9f9f9,#f1f1f1)"><Strip items={row1} end={1366} /></BarRow>
      <Main>
        <LeftNav>
          <NavHead>模块导航栏<NavHeadBtns><Ic n="pin" s={11} /><Ic n="close" s={11} /></NavHeadBtns></NavHead>
          <NavBtn $h={21}>工程设置</NavBtn>
          <NavBtn $h={21}>绘图输入</NavBtn>
          <ExpandBar><Ic n="plus2" /><Ic n="minus2" /></ExpandBar>
          <TreeBox>
            <TreeInner>
              <TreeList>
                {tree.map((r, i) =>
                  r.ic ? (
                    <Row key={i} $lvl={1} $dots>
                      <RowIcon $hl={r.hl}><Ic n={r.ic} /></RowIcon>
                      <RowText $hl={r.hl}>{r.t}</RowText>
                    </Row>
                  ) : (
                    <Row key={i} $lvl={0}>
                      <Chev>{r.open ? <ChevD /> : <ChevR />}</Chev>
                      <RowIcon><Ic n={r.open ? 'foldOpen' : 'fold'} /></RowIcon>
                      <RowText>{r.t}</RowText>
                    </Row>
                  )
                )}
              </TreeList>
              <VScroll><ScrollUp><ChevU /></ScrollUp><ScrollThumb /></VScroll>
            </TreeInner>
            <HScroll><HArrow><ChevL /></HArrow><HThumb /></HScroll>
          </TreeBox>
          <NavBtn $h={23}>单构件输入</NavBtn>
          <NavBtn $h={22} $mt={0}>报表预览</NavBtn>
        </LeftNav>
        <RightCol>
          <BarRow $h={26} $bg="linear-gradient(#fbfbfb,#f1f1f1)"><Strip items={row2} end={1366} /></BarRow>
          <Work>
            <CompPanel>
              <SearchRow><SearchInput>搜索构件...</SearchInput><SearchBtn><Ic n="mag" /></SearchBtn></SearchRow>
              <CompTree>
                <CRow><Chev><ChevD /></Chev><IconBox $w={20}><Ic n="hjd" /></IconBox><CText>后浇带</CText></CRow>
                <CRow $child><CText $sel><Ic n="hjdDot" s={14} /><Lat>HJD-1</Lat></CText></CRow>
                <CRow $child><CText><Ic n="hjdDot" s={14} /><Lat>HJD-2</Lat></CText></CRow>
              </CompTree>
            </CompPanel>
            <PropPanel>
              <TabBar><Tab>属性编辑</Tab></TabBar>
              <PropBody>
                <TableWrap>
                  <Grid>
                    <colgroup><col width="22" /><col width="190" /><col width="127" /><col width="30" /></colgroup>
                    <thead><tr><HCell /><HCell>属性名称</HCell><HCell $val>属性值</HCell><HCell>附加</HCell></tr></thead>
                    <tbody>
                      {rows.map(r => (
                        <tr key={r.n}>
                          <NumCell>{r.n}</NumCell>
                          <NameCell $c={r.c}>{r.name}</NameCell>
                          <ValCell>{r.val}</ValCell>
                          <AddCell>{r.chk && <Check />}</AddCell>
                        </tr>
                      ))}
                      <tr><NumCell>9</NumCell><NameCell $c="#8a8a8a"><Minus>−</Minus>筏板(承台)后浇带</NameCell><ValCell /><AddCell /></tr>
                      <tr><NumCell $on>10</NumCell><NameCell $on $c="#fff" $sub={8}>—— 后浇带类型</NameCell><ValCell $on>矩形下沉后浇带</ValCell><AddCell><Check /></AddCell></tr>
                      <tr><NumCell>11</NumCell><NameCell $c="#0000ff" $sub={30}>其他加强筋</NameCell><ValCell /><AddCell /></tr>
                    </tbody>
                  </Grid>
                </TableWrap>
                <ParamPanel>
                  <ParamTitle>参数图</ParamTitle>
                  <RadioBar $h={31} $first={104} $gap={133}>
                    <Radio><RadioDot />角度放坡形式</Radio>
                    <Radio><RadioDot $on />底宽放坡形式</Radio>
                  </RadioBar>
                  <ParamCanvas>
                    <CadSvg viewBox="783 197 553 452">
                      <g transform="translate(820 327) scale(.724 .72) translate(-400 -500)"><Drawing /></g>
                      <text x="1076" y="553" fontSize="15" fill="#ddd" fontFamily={CJK}>浇带配筋3</text>
                    </CadSvg>
                    <Input150>150</Input150>
                  </ParamCanvas>
                  <ParamFoot><FootBtn>配筋形式</FootBtn></ParamFoot>
                </ParamPanel>
                <RightGutter />
              </PropBody>
            </PropPanel>
          </Work>
        </RightCol>
      </Main>
      <StatusBar><StatusMain /><StatusFps>223.5 FPS</StatusFps></StatusBar>
      <Taskbar>
        <StartBtn><Win /></StartBtn>
        <SearchBox><Cortana />在这里输入你要搜索的内容<MicWrap><Mic /></MicWrap></SearchBox>
        <TaskSlot $w={48}><TaskView /></TaskSlot>
        <TaskSlot $w={52}><Fan /></TaskSlot>
        <TaskSlot $w={55}><IeE c="#1f8ee8" badge="#e8771c" /></TaskSlot>
        <TaskSlot $w={50}><Spiral /></TaskSlot>
        <TaskSlot $w={38}><IeE c="#0a78d6" /></TaskSlot>
        <TaskSlot $w={40}><IeE c="#2b9be8" ring="#f2c822" /></TaskSlot>
        <TaskSlot $w={38} $run><Folder /></TaskSlot>
        <TaskSlot $w={39} $run><GreenApp /></TaskSlot>
        <TaskSlot $w={38}><Mail /></TaskSlot>
        <TaskSlot $w={38} $run><BlueG /></TaskSlot>
        <TaskSlot $w={37} $active $run><Gld s={25} /></TaskSlot>
        <TaskSlot $w={36} $run><Note /></TaskSlot>
        <TaskScroll><ChevU c="#333" /><ChevDn c="#333" /></TaskScroll>
        <TaskSlot $w={60}><People /></TaskSlot>
        <TwoLine $w={66}><span>25%</span><span>CPU使用</span></TwoLine>
        <TaskSlot $w={32}><TrayChev /></TaskSlot>
        <TaskSlot $w={22}><Plug /></TaskSlot>
        <TaskSlot $w={24}><Wifi /></TaskSlot>
        <TaskSlot $w={23}><Speaker /></TaskSlot>
        <TaskSlot $w={30}><Kbd /></TaskSlot>
        <TwoLine $w={26}><TrayZh>中</TrayZh></TwoLine>
        <TaskSlot $w={30}><TrayS>S</TrayS></TaskSlot>
        <TwoLine $w={70}><span>9:15</span><span>2018/10/25</span></TwoLine>
        <TaskSlot $w={46}><Notify /><NotifyBadge>4</NotifyBadge></TaskSlot>
      </Taskbar>
      <Dialog>
        <DlgTitle>
          <Gld s={16} />
          <DlgTitleText>参数化选择</DlgTitleText>
          <DlgBtns>
            <DlgBtn><svg width="11" height="2"><rect width="11" height="1" fill="#222" /></svg></DlgBtn>
            <DlgBtn><svg width="11" height="11"><rect x=".5" y=".5" width="10" height="10" fill="none" stroke="#222" /></svg></DlgBtn>
            <DlgBtn><svg width="11" height="11"><path d="M.5.5l10 10M10.5.5l-10 10" stroke="#222" /></svg></DlgBtn>
          </DlgBtns>
        </DlgTitle>
        <DlgBody>
          <DlgLeft>
            <GroupLabel>图形</GroupLabel>
            <CardGrid>
              <Thumb label="矩形后浇带" lx={29} ly={125}>
                <defs><Hatch id="h1" /></defs>
                <path d="M3 43H129M3 83H129" {...W} />
                <rect x="29" y="43" width="74" height="40" fill="url(#h1)" stroke="#fff" />
              </Thumb>
              <Thumb sel label="矩形下沉后浇带" lx={15} ly={118}>
                <defs><Hatch id="h2" /></defs>
                <path d="M0 32H131M0 61H131" {...W} />
                <path d="M37 33l3 5-3 5 3 5-3 5 3 5v3H95v-3l3-5-3-5 3-5-3-5 3-5z" fill="url(#h2)" stroke="#fff" strokeDasharray="3 1" />
                <rect x="39" y="61" width="55" height="2.5" {...W} />
                <Sink y={62} />
                <path d="M65 28V85M69 62V84" {...W} />
                <Ticks y={61} />
              </Thumb>
              <Thumb label="槽形下沉后浇带" lx={15} ly={124}>
                <defs><Hatch id="h3" /></defs>
                <path d="M1 45H131M1 74H131" {...W} />
                <path d="M39 45H98L104 59L98 74H39V65L33 59L39 53z" fill="url(#h3)" stroke="#fff" />
                <rect x="39" y="74" width="59" height="3" {...W} />
                <path d="M18 75L32 97H106L120 75" {...W} />
                <path d="M67 40V97M71 76V97" {...W} />
                <Ticks y={74} />
              </Thumb>
              <Thumb label="阶梯下沉后浇带" lx={15} ly={123}>
                <defs><Hatch id="h4" /></defs>
                <path d="M0 37H131M0 66H131" {...W} />
                <path d="M31 38H102V56H96V66H37V56H31z" fill="url(#h4)" stroke="#fff" />
                <rect x="37" y="66" width="59" height="2.5" {...W} />
                <Sink y={67} />
                <path d="M65 33V89M69 67V89" {...W} />
                <Ticks y={66} />
              </Thumb>
              <Thumb />
              <Thumb />
            </CardGrid>
          </DlgLeft>
          <DlgRight>
            <RadioBar $h={30} $first={170} $gap={134}>
              <Radio><RadioDot />角度放坡形式</Radio>
              <Radio><RadioDot $on />底宽放坡形式</Radio>
            </RadioBar>
            <DlgCanvas>
              <CadSvg viewBox="387 417 685 311"><Drawing green150 /></CadSvg>
            </DlgCanvas>
          </DlgRight>
        </DlgBody>
      </Dialog>
      <Sogou>
        <GreenBall>72</GreenBall>
        <SogouS>S</SogouS>
        <SogouBar>
          <SogouCell $w={28}>中</SogouCell>
          <SogouCell $w={20}>°,</SogouCell>
          <SogouCell $w={22}><FaRegSmile size={16} /></SogouCell>
          <SogouCell $w={22}><FaMicrophone size={15} /></SogouCell>
          <SogouCell $w={24}><FaKeyboard size={16} /></SogouCell>
          <SogouCell $w={22} $c="#b4c2ce"><FaUser size={13} /></SogouCell>
          <SogouCell $w={20}><FaTshirt size={15} /></SogouCell>
          <SogouCell $w={22}><FaWrench size={14} /></SogouCell>
        </SogouBar>
      </Sogou>
    </Screen>
  );
}
